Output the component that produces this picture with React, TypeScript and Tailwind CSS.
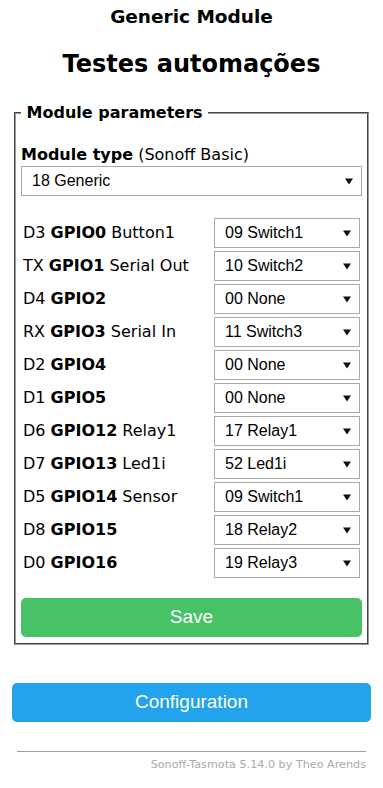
import React from "react";

const rows: [string, string, string, string][] = [
  ["D3", "GPIO0", "Button1", "09 Switch1"],
  ["TX", "GPIO1", "Serial Out", "10 Switch2"],
  ["D4", "GPIO2", "", "00 None"],
  ["RX", "GPIO3", "Serial In", "11 Switch3"],
  ["D2", "GPIO4", "", "00 None"],
  ["D1", "GPIO5", "", "00 None"],
  ["D6", "GPIO12", "Relay1", "17 Relay1"],
  ["D7", "GPIO13", "Led1i", "52 Led1i"],
  ["D5", "GPIO14", "Sensor", "09 Switch1"],
  ["D8", "GPIO15", "", "18 Relay2"],
  ["D0", "GPIO16", "", "19 Relay3"],
];

function FakeSelect({ value, className }: { value: string; className?: string }) {
  return (
    <div
      className={
        "flex h-[30px] items-center justify-between border border-[#a9a9a9] bg-white pl-[10px] pr-[8px] text-[16px] text-black " +
        (className ?? "")
      }
      style={{ fontFamily: '"Liberation Sans", Arial, sans-serif' }}
    >
      <span>{value}</span>
      <svg width="8" height="7" viewBox="0 0 8 7" aria-hidden>
        <path d="M0 0.5 L8 0.5 L4 6.5 Z" fill="#111" />
      </svg>
    </div>
  );
}

export default function App() {
  return (
    <div
      className="min-h-[788px] bg-white text-black"
      style={{ fontFamily: '"DejaVu Sans", Verdana, sans-serif' }}
    >
      <div className="mx-auto w-[359px] pt-[6px]">
        <h3 className="text-center text-[18.5px] font-bold leading-[22px]">Generic Module</h3>
        <h2 className="mt-[21px] text-center text-[24px] font-bold leading-[30px]">
          Testes automações
        </h2>

        <fieldset className="mx-[2px] mt-[24px] border-2 border-[#999] px-[5px] pb-[3px] [border-style:groove]">
          <legend className="text-[16px] font-bold leading-[20px]">&nbsp;Module parameters&nbsp;</legend>
          <div className="mt-[21px] text-[16px] leading-[22px]">
            <b>Module type</b> (Sonoff Basic)
          </div>
          <FakeSelect value="18 Generic" />

          <div className="mt-[22px] flex flex-col gap-[3px]">
            {rows.map(([pin, gpio, fn, val]) => (
              <div key={gpio} className="flex items-center">
                <div className="flex-1 pl-[2px] text-[16px] leading-[20px]">
                  {pin} <b>{gpio}</b>
                  {fn ? " " + fn : ""}
                </div>
                <FakeSelect value={val} className="mr-[2px] w-[146px]" />
              </div>
            ))}
          </div>

          <button
            className="mt-[20px] mb-[3px] block h-[39px] w-full rounded-[5px] bg-[#47c266] text-[19px] text-white"
            style={{ fontFamily: '"Liberation Sans", Arial, sans-serif' }}
          >
            Save
          </button>
        </fieldset>

        <button
          className="mt-[38px] block h-[39px] w-full rounded-[5px] bg-[#22a3eb] text-[19px] text-white"
          style={{ fontFamily: '"Liberation Sans", Arial, sans-serif' }}
        >
          Configuration
        </button>

        <div className="mt-[29px] px-[5px]">
          <hr className="border-t border-[#a0a0a0]" />
          <div className="mt-[5px] text-right text-[11.2px] leading-[16px] text-[#aaa]">
            Sonoff-Tasmota 5.14.0 by Theo Arends
          </div>
        </div>
      </div>
    </div>
  );
}
